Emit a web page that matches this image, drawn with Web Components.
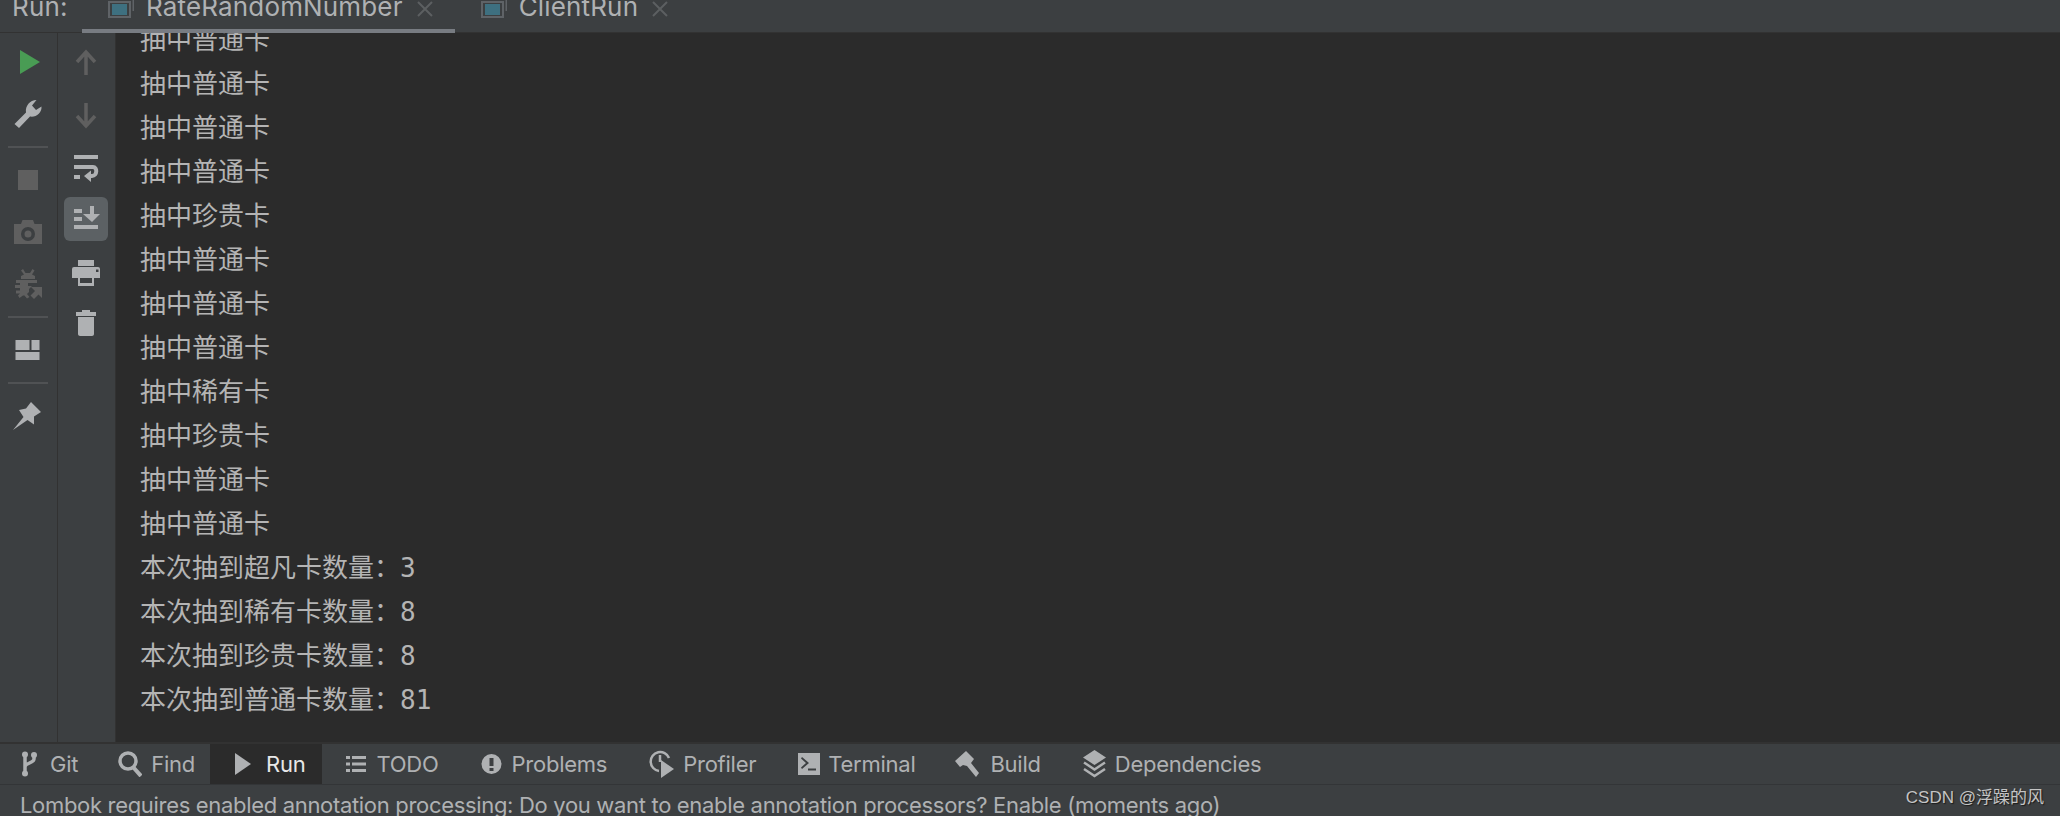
<!DOCTYPE html>
<html>
<head>
<meta charset="utf-8">
<title>Run</title>
<style>
    html, body { margin: 0; height: 100%; background: #2b2b2b; }
    body { font-family: Inter, "Noto Sans CJK SC", sans-serif; overflow: hidden; }
</style>
</head>
<body>
<ide-window>
    <run-tabs slot="tabs">
        <run-tab selected>RateRandomNumber</run-tab>
        <run-tab>ClientRun</run-tab>
    </run-tabs>
    <side-strip slot="left" style="--strip-width: 56px; --strip-right: 1px; --strip-top: 3px">
        <strip-btn><svg viewBox="0 0 32 32"><path fill="#499c54" d="M8 4 28 16 8 28z"/></svg></strip-btn>
        <strip-btn><svg viewBox="0 0 32 32"><path fill="#afb1b3" d="M2.500 26 14 14.500C13 8 18 2 24.500 2L20 7.500 24 12 29.500 8.500C30 15 24 19.500 18 18.500L7 30z"/></svg></strip-btn>
        <strip-sep></strip-sep>
        <strip-btn><svg viewBox="0 0 32 32"><rect x="6" y="6" width="20" height="20" fill="#5f5f5f"/></svg></strip-btn>
        <strip-btn><svg viewBox="0 0 32 32"><path fill="#5f5f5f" fill-rule="evenodd" d="M2 8H9L10.500 4H21L22.500 8H30V28H2zM16 11A7 7 0 1 0 16 25 7 7 0 0 0 16 11zM16 14.500A3.500 3.500 0 1 1 16 21.500 3.500 3.500 0 0 1 16 14.500z"/></svg></strip-btn>
        <strip-btn><svg viewBox="0 0 32 32"><path fill="#5f5f5f" d="M11 1 13.500 5H18L20.500 1 22.500 2.500 20 6.500 23 8V11H9V8L12 6.500 9 2.500zM4 12H25V15H16V18H20L17 21V24L15 26 17.500 29 15 30.500 12.500 27.500H11L7.500 30 6 27.500 8 25.500H4V22.500H8V20H3V17H8V15H4z"/><path fill="#5f5f5f" d="M19 19H30V30L26.500 26.500 22 31 18.500 27.500 23 23z"/></svg></strip-btn>
        <strip-sep></strip-sep>
        <strip-btn><svg viewBox="0 0 32 32"><path fill="#afb1b3" d="M3.500 6H17.500V16H3.500zM19.500 6H27.500V16H19.500zM3.500 18H27.500V26H3.500z"/></svg></strip-btn>
        <strip-sep></strip-sep>
        <strip-btn><svg viewBox="0 0 32 32"><path fill="#afb1b3" d="M1 30 11.500 17 7 10 14 8.500 19 2 29 12 22 16.500 22 24.500 15.500 20z"/></svg></strip-btn>
    </side-strip>
    <side-strip slot="left" style="--strip-width: 55px; --strip-right: 2px; --strip-top: 4px">
        <strip-btn><svg viewBox="0 0 32 32"><path fill="none" stroke="#5f5f5f" stroke-width="3.500" d="M16 28V6M7 15 16 5 25 15"/></svg></strip-btn>
        <strip-btn><svg viewBox="0 0 32 32"><path fill="none" stroke="#5f5f5f" stroke-width="3.500" d="M16 4V26M7 17 16 27 25 17"/></svg></strip-btn>
        <strip-btn><svg viewBox="0 0 32 32"><path fill="none" stroke="#afb1b3" stroke-width="4" d="M4 6H28M4 16H23C27.500 16 27.500 25 22 25H17"/><path fill="#afb1b3" d="M4 24H10V28H4zM21 19.500V31L14 25z"/></svg></strip-btn>
        <strip-btn active><svg viewBox="0 0 32 32"><path fill="#afb1b3" d="M4 22H28V26H4zM4 6H12V10H4zM4 14H12V18H4zM20 3H24V11H30L22 19 13 11H20z"/></svg></strip-btn>
        <strip-btn><svg viewBox="0 0 32 32"><path fill="#afb1b3" fill-rule="evenodd" d="M8 5H24V11H8zM2 14Q2 12 4 12H28Q30 12 30 14V23H24V31H8V23H2zM10 23V28H22V23zM26 14.500V17H28.500V14.500z"/></svg></strip-btn>
        <strip-btn><svg viewBox="0 0 32 32"><path fill="#afb1b3" d="M12 3H20V5H26V9H6V5H12zM8 10H24V27C24 28 23 29 22 29H10C9 29 8 28 8 27z"/></svg></strip-btn>
    </side-strip>
    <console-view slot="main">
        <console-line>抽中普通卡</console-line>
        <console-line>抽中普通卡</console-line>
        <console-line>抽中普通卡</console-line>
        <console-line>抽中普通卡</console-line>
        <console-line>抽中珍贵卡</console-line>
        <console-line>抽中普通卡</console-line>
        <console-line>抽中普通卡</console-line>
        <console-line>抽中普通卡</console-line>
        <console-line>抽中稀有卡</console-line>
        <console-line>抽中珍贵卡</console-line>
        <console-line>抽中普通卡</console-line>
        <console-line>抽中普通卡</console-line>
        <console-line>本次抽到超凡卡数量：3</console-line>
        <console-line>本次抽到稀有卡数量：8</console-line>
        <console-line>本次抽到珍贵卡数量：8</console-line>
        <console-line>本次抽到普通卡数量：81</console-line>
    </console-view>
    <tool-bar slot="tools">
        <tool-btn style="padding-right:19px"><svg slot="icon" width="20" height="26" viewBox="0 0 20 26"><path fill="none" stroke="#afb1b3" stroke-width="3.500" d="M5 3V23M14 4V8C14 12 5 12 5 16"/><circle cx="5" cy="3.500" r="3" fill="#afb1b3"/><circle cx="14" cy="4" r="3" fill="#afb1b3"/><circle cx="5" cy="22.500" r="3" fill="#afb1b3"/></svg>Git</tool-btn>
        <tool-btn style="padding:0 15px 0 21px; gap:9px"><svg slot="icon" width="24" height="26" viewBox="0 0 24 26"><circle cx="10" cy="10" r="8" fill="none" stroke="#afb1b3" stroke-width="3.500"/><path stroke="#afb1b3" stroke-width="4" d="M15 16 23 25"/></svg>Find</tool-btn>
        <tool-btn active style="padding:0 17px 0 24px"><svg slot="icon" width="18" height="24" viewBox="0 0 18 24"><path fill="#afb1b3" d="M1 1 17 12 1 23z"/></svg>Run</tool-btn>
        <tool-btn style="padding:0 22px 0 24px"><svg slot="icon" width="20" height="18" viewBox="0 0 20 18"><path fill="#afb1b3" d="M0 1H4V4H0zM6 1H20V4H6zM0 7.500H4V10.500H0zM6 7.500H20V10.500H6zM0 14H4V17H0zM6 14H20V17H6z"/></svg>TODO</tool-btn>
        <tool-btn><svg slot="icon" width="21" height="22" viewBox="0 0 21 22"><path fill="#afb1b3" fill-rule="evenodd" d="M10.500 1A10 10 0 1 0 10.500 21 10 10 0 0 0 10.500 1zM8.500 5H12.500V13H8.500zM8.500 15H12.500V18H8.500z"/></svg>Problems</tool-btn>
        <tool-btn style="padding-left:22px; gap:8px"><svg slot="icon" width="26" height="28" viewBox="0 0 26 28"><path fill="none" stroke="#afb1b3" stroke-width="2.500" d="M10 21A9.500 9.500 0 1 1 20 8M11 5V12"/><path fill="#afb1b3" d="M12 10 25 19 12 28z"/></svg>Profiler</tool-btn>
        <tool-btn style="padding:0 19px 0 22px; gap:8px"><svg slot="icon" width="22" height="24" viewBox="0 0 22 24"><path fill="#afb1b3" fill-rule="evenodd" d="M0 1H22V23H0zM4 5 3 6.500 8 11 3 15.500 4 17 11 11zM10 16.500V18.500H18V16.500z"/></svg>Terminal</tool-btn>
        <tool-btn style="padding:0 19px 0 21px; gap:9px"><svg slot="icon" width="26" height="28" viewBox="0 0 26 28"><path fill="#afb1b3" d="M11 1 19 9 16 13 24 23 21 27 12 16 8 15 5 17 0 11z"/></svg>Build</tool-btn>
        <tool-btn style="padding-left:22px; gap:8px"><svg slot="icon" width="25" height="30" viewBox="0 0 25 30"><path fill="#afb1b3" d="M12.500 1 24 8.500 12.500 16 1 8.500z"/><path fill="none" stroke="#afb1b3" stroke-width="2.500" d="M2 13.500 12.500 20.500 23 13.500M2 20 12.500 27 23 20"/></svg>Dependencies</tool-btn>
    </tool-bar>
    <status-bar slot="status">Lombok requires enabled annotation processing: Do you want to enable annotation processors? Enable (moments ago)</status-bar>
</ide-window>
<water-mark>CSDN @浮躁的风</water-mark>

<script>
    class IdeWindow extends HTMLElement {
        constructor() {
            super();
            this.attachShadow({ mode: 'open' });
            this.shadowRoot.innerHTML = `
            <style>
                :host {
                    display: flex;
                    flex-direction: column;
                    width: 2060px;
                    height: 816px;
                    overflow: hidden;
                }
                .middle {
                    display: flex;
                    flex: 1;
                    min-height: 0;
                }
            </style>
            <slot name="tabs"></slot>
            <div class="middle">
                <slot name="left"></slot>
                <slot name="main"></slot>
            </div>
            <slot name="tools"></slot>
            <slot name="status"></slot>`;
        }
    }

    class RunTabs extends HTMLElement {
        constructor() {
            super();
            this.attachShadow({ mode: 'open' });
            this.shadowRoot.innerHTML = `
            <style>
                :host {
                    display: flex;
                    height: 33px;
                    flex: none;
                    box-sizing: border-box;
                    background: #3c3f41;
                    border-bottom: 1px solid #323232;
                    color: #afb1b3;
                    font-size: 26px;
                    letter-spacing: 0.16px;
                }
                .label {
                    width: 82px;
                    padding-left: 12px;
                    box-sizing: border-box;
                    line-height: 26px;
                    flex: none;
                    margin-top: -6px;
                }
            </style>
            <div class="label">Run:</div>
            <slot></slot>`;
        }
    }

    class RunTab extends HTMLElement {
        constructor() {
            super();
            this.attachShadow({ mode: 'open' });
            this.shadowRoot.innerHTML = `
            <style>
                :host {
                    display: flex;
                    height: 34px;
                    box-sizing: border-box;
                    padding: 0 22px 0 26px;
                    line-height: 26px;
                }
                :host([selected]) { border-bottom: 5px solid #787c82; }
                .text { margin: -6px 14px 0 12px; }
                svg { flex: none; }
            </style>
            <svg width="26" height="18" viewBox="0 0 26 18"><path fill="#3e7080" d="M4 4H19V15H4z"/><path fill="none" stroke="#5f6367" stroke-width="2" d="M1 2H22V17H1zM25.500 0V11"/></svg>
            <span class="text"><slot></slot></span>
            <svg width="16" height="16" viewBox="0 0 16 16" style="margin-top:1px"><path stroke="#5c5f61" stroke-width="2" d="M1 1 15 15M15 1 1 15"/></svg>`;
        }
    }

    class SideStrip extends HTMLElement {
        constructor() {
            super();
            this.attachShadow({ mode: 'open' });
            this.shadowRoot.innerHTML = `
            <style>
                :host {
                    display: flex;
                    flex-direction: column;
                    align-items: center;
                    flex: none;
                    width: var(--strip-width);
                    padding-top: var(--strip-top);
                    padding-right: var(--strip-right);
                    background: #3c3f41;
                    border-right: 1.5px solid #323232;
                }
            </style>
            <slot></slot>`;
        }
    }

    class StripBtn extends HTMLElement {
        constructor() {
            super();
            this.attachShadow({ mode: 'open' });
            this.shadowRoot.innerHTML = `
            <style>
                :host {
                    display: flex;
                    align-items: center;
                    justify-content: center;
                    width: 100%;
                    height: 52px;
                    flex: none;
                }
                .box {
                    display: flex;
                    align-items: center;
                    justify-content: center;
                    width: 44px;
                    height: 44px;
                    border-radius: 6px;
                }
                :host([active]) .box { background: #5c6164; }
                ::slotted(svg) { width: 32px; height: 32px; }
            </style>
            <div class="box"><slot></slot></div>`;
        }
    }

    class StripSep extends HTMLElement {
        constructor() {
            super();
            this.attachShadow({ mode: 'open' });
            this.shadowRoot.innerHTML = `
            <style>
                :host {
                    display: block;
                    width: 40px;
                    height: 2px;
                    margin: 6px 0;
                    background: #505254;
                    flex: none;
                }
            </style>`;
        }
    }

    class ConsoleView extends HTMLElement {
        constructor() {
            super();
            this.attachShadow({ mode: 'open' });
            this.shadowRoot.innerHTML = `
            <style>
                :host {
                    display: block;
                    flex: 1;
                    min-width: 0;
                    overflow: hidden;
                    background: #2b2b2b;
                    color: #b4b4b4;
                    font-family: "DejaVu Sans Mono", "Noto Sans CJK SC", monospace;
                    font-size: 26px;
                }
                .rows {
                    margin-top: -15px;
                    padding-left: 24px;
                }
            </style>
            <div class="rows"><slot></slot></div>`;
        }
    }

    class ConsoleLine extends HTMLElement {
        constructor() {
            super();
            this.attachShadow({ mode: 'open' });
            this.shadowRoot.innerHTML = `
            <style>
                :host {
                    display: block;
                    height: 44px;
                    line-height: 44px;
                }
            </style>
            <slot></slot>`;
        }
    }

    class ToolBar extends HTMLElement {
        constructor() {
            super();
            this.attachShadow({ mode: 'open' });
            this.shadowRoot.innerHTML = `
            <style>
                :host {
                    display: flex;
                    align-items: stretch;
                    flex: none;
                    height: 40px;
                    background: #3c3f41;
                    border-top: 2px solid #323232;
                    border-bottom: 1px solid #333537;
                }
            </style>
            <slot></slot>`;
        }
    }

    class ToolBtn extends HTMLElement {
        constructor() {
            super();
            this.attachShadow({ mode: 'open' });
            this.shadowRoot.innerHTML = `
            <style>
                :host {
                    display: flex;
                    align-items: center;
                    gap: 10px;
                    flex: none;
                    padding: 0 20px;
                    color: #afb1b3;
                    font-size: 22px;
                    letter-spacing: -0.25px;
                }
                :host([active]) { background: #2b2b2b; color: #e8e8e8; gap: 14px; }
                ::slotted(svg) { flex: none; }
            </style>
            <slot name="icon"></slot>
            <slot></slot>`;
        }
    }

    class StatusBar extends HTMLElement {
        constructor() {
            super();
            this.attachShadow({ mode: 'open' });
            this.shadowRoot.innerHTML = `
            <style>
                :host {
                    display: block;
                    flex: none;
                    height: 31px;
                    box-sizing: border-box;
                    padding-left: 20px;
                    background: #3c3f41;
                    color: #afb1b3;
                    font-size: 22px;
                    letter-spacing: -0.32px;
                    line-height: 40px;
                    white-space: nowrap;
                    overflow: hidden;
                }
            </style>
            <slot></slot>`;
        }
    }

    class WaterMark extends HTMLElement {
        constructor() {
            super();
            this.attachShadow({ mode: 'open' });
            this.shadowRoot.innerHTML = `
            <style>
                :host {
                    position: absolute;
                    right: 16px;
                    bottom: 7px;
                    color: #c4c4c4;
                    font-family: "Liberation Sans", "Noto Sans CJK SC", sans-serif;
                    font-size: 17px;
                    line-height: 22px;
                    text-shadow: 1px 1px 1px #1c1c1c;
                }
            </style>
            <slot></slot>`;
        }
    }

    customElements.define('ide-window', IdeWindow);
    customElements.define('run-tabs', RunTabs);
    customElements.define('run-tab', RunTab);
    customElements.define('side-strip', SideStrip);
    customElements.define('strip-btn', StripBtn);
    customElements.define('strip-sep', StripSep);
    customElements.define('console-view', ConsoleView);
    customElements.define('console-line', ConsoleLine);
    customElements.define('tool-bar', ToolBar);
    customElements.define('tool-btn', ToolBtn);
    customElements.define('status-bar', StatusBar);
    customElements.define('water-mark', WaterMark);
</script>
</body>
</html>
